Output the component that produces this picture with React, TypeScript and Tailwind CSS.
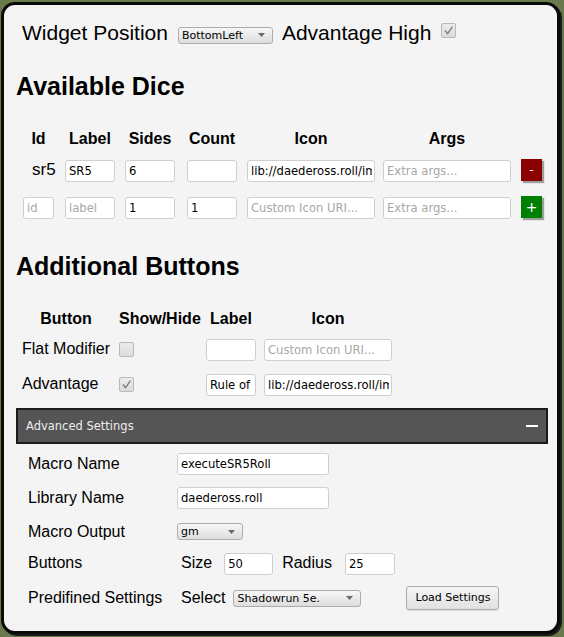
import React from "react";

const inputCls =
  "h-[22px] bg-white border border-[#cfcfcf] rounded-[3px] pl-[3px] pr-[2px] text-[11.6px] text-black placeholder:text-[#a8a8a8] outline-none font-['DejaVu_Sans',sans-serif] shrink-0";

function Input({ w, value, placeholder }: { w: string; value?: string; placeholder?: string }) {
  return <input className={`${inputCls} ${w}`} defaultValue={value} placeholder={placeholder} />;
}

function Select({ w, text, className = "" }: { w: string; text: string; className?: string }) {
  return (
    <div
      className={`${w} ${className} h-[17px] shrink-0 flex items-center justify-between pl-[3px] pr-[7px] border border-[#acacac] rounded-[3px] bg-gradient-to-b from-[#f7f7f7] to-[#dddddd] text-[11px] leading-none text-black font-['DejaVu_Sans',sans-serif]`}
    >
      <span className="whitespace-nowrap">{text}</span>
      <svg width="7" height="4" viewBox="0 0 7 4">
        <path d="M0 0 L7 0 L3.5 4 Z" fill="#6a6a6a" />
      </svg>
    </div>
  );
}

function Checkbox({ checked, className = "" }: { checked?: boolean; className?: string }) {
  return (
    <div
      className={`w-[15px] h-[15px] shrink-0 border border-[#b9b9b9] rounded-[2px] bg-gradient-to-b from-[#ebebeb] to-[#dcdcdc] flex items-center justify-center ${className}`}
    >
      {checked && (
        <svg width="11" height="11" viewBox="0 0 11 11">
          <path d="M2 5.5 L4.6 8.6 L9.4 1.6" stroke="#7c7c7c" strokeWidth="1.3" fill="none" />
        </svg>
      )}
    </div>
  );
}

export default function App() {
  return (
    <div className="w-[564px] h-[637px] bg-[#6b7a4c] pt-[2px] pl-[1px] font-['Liberation_Sans',Arial,sans-serif] text-black">
      <div className="w-[559px] h-[632px] bg-[#f4f4f4] border-[3px] border-[#0a0a0a] rounded-[14px] shadow-[2px_2px_0_#1a1a1a] pl-[12px] pr-[9px] pt-[16px]">
        {/* Top row */}
        <div className="flex items-center h-[24px] ml-[6px]">
          <span className="text-[21px] leading-[24px] whitespace-nowrap">Widget Position</span>
          <Select w="w-[95px]" text="BottomLeft" className="ml-[10px] mt-[4px]" />
          <span className="ml-[9px] text-[21px] leading-[24px] whitespace-nowrap">Advantage High</span>
          <Checkbox checked className="ml-[10px] -mt-[6px]" />
        </div>

        <h2 className="mt-[26px] text-[25px] leading-[30px] font-bold">Available Dice</h2>

        {/* Dice header */}
        <div className="mt-[28px] h-[20px] flex items-center text-[16px] font-bold leading-[20px]">
          <div className="ml-[7px] w-[31px] text-center">Id</div>
          <div className="ml-[11px] w-[50px] text-center">Label</div>
          <div className="ml-[10px] w-[50px] text-center">Sides</div>
          <div className="ml-[12px] w-[50px] text-center">Count</div>
          <div className="ml-[10px] w-[128px] text-center">Icon</div>
          <div className="ml-[8px] w-[128px] text-center">Args</div>
        </div>

        {/* Dice row 1 */}
        <div className="mt-[10px] h-[22px] flex items-center">
          <div className="ml-[7px] w-[31px] shrink-0 text-[17px] whitespace-nowrap">
            <span className="ml-[9px]">sr5</span>
          </div>
          <div className="ml-[11px]"><Input w="w-[50px]" value="SR5" /></div>
          <div className="ml-[10px]"><Input w="w-[50px]" value="6" /></div>
          <div className="ml-[12px]"><Input w="w-[50px]" value="" /></div>
          <div className="ml-[10px]"><Input w="w-[128px]" value="lib://daedeross.roll/images/sr5.png" /></div>
          <div className="ml-[8px]"><Input w="w-[128px]" placeholder="Extra args..." /></div>
          <div className="ml-[10px] w-[21px] h-[22px] bg-[#8b0000] text-white text-[12px] flex items-center justify-center shadow-[2px_2px_1px_rgba(0,0,0,0.35)] font-['DejaVu_Sans',sans-serif]">
            -
          </div>
        </div>

        {/* Dice row 2 */}
        <div className="mt-[15px] h-[22px] flex items-center">
          <div className="ml-[7px]"><Input w="w-[31px]" placeholder="id" /></div>
          <div className="ml-[11px]"><Input w="w-[50px]" placeholder="label" /></div>
          <div className="ml-[10px]"><Input w="w-[50px]" value="1" /></div>
          <div className="ml-[12px]"><Input w="w-[50px]" value="1" /></div>
          <div className="ml-[10px]"><Input w="w-[128px]" placeholder="Custom Icon URI..." /></div>
          <div className="ml-[8px]"><Input w="w-[128px]" placeholder="Extra args..." /></div>
          <div className="ml-[10px] w-[21px] h-[22px] bg-[#008000] text-white text-[14px] flex items-center justify-center shadow-[2px_2px_1px_rgba(0,0,0,0.35)] font-['DejaVu_Sans',sans-serif]">
            +
          </div>
        </div>

        <h2 className="mt-[33px] text-[25px] leading-[30px] font-bold">Additional Buttons</h2>

        {/* AB header */}
        <div className="mt-[28px] h-[20px] flex items-center text-[16px] font-bold leading-[20px]">
          <div className="ml-[6px] w-[88px] text-center">Button</div>
          <div className="ml-[9px] w-[80px] text-center whitespace-nowrap">Show/Hide</div>
          <div className="ml-[7px] w-[50px] text-center">Label</div>
          <div className="ml-[8px] w-[128px] text-center">Icon</div>
        </div>

        {/* Flat Modifier */}
        <div className="mt-[9px] h-[22px] flex items-center text-[16px]">
          <div className="ml-[6px] w-[88px] whitespace-nowrap">Flat Modifier</div>
          <div className="ml-[9px] w-[80px]"><Checkbox /></div>
          <div className="ml-[7px]"><Input w="w-[50px]" value="" /></div>
          <div className="ml-[8px]"><Input w="w-[128px]" placeholder="Custom Icon URI..." /></div>
        </div>

        {/* Advantage */}
        <div className="mt-[13px] h-[22px] flex items-center text-[16px]">
          <div className="ml-[6px] w-[88px] whitespace-nowrap">Advantage</div>
          <div className="ml-[9px] w-[80px]"><Checkbox checked /></div>
          <div className="ml-[7px]"><Input w="w-[50px]" value="Rule of Six" /></div>
          <div className="ml-[8px]"><Input w="w-[128px]" value="lib://daedeross.roll/images/adv.png" /></div>
        </div>

        {/* Advanced Settings bar */}
        <div className="mt-[13px] h-[36px] bg-[#555555] border-2 border-[#1c1c1c] flex items-center justify-between pl-[8px] pr-[8px]">
          <span className="text-[11.5px] text-[#eeeeee] font-['DejaVu_Sans',sans-serif] mt-[2px]">Advanced Settings</span>
          <div className="w-[12px] h-[2px] bg-white" />
        </div>

        {/* Macro Name */}
        <div className="mt-[9px] h-[22px] flex items-center text-[16px]">
          <div className="ml-[12px] w-[149px] whitespace-nowrap">Macro Name</div>
          <Input w="w-[152px]" value="executeSR5Roll" />
        </div>

        {/* Library Name */}
        <div className="mt-[12px] h-[22px] flex items-center text-[16px]">
          <div className="ml-[12px] w-[149px] whitespace-nowrap">Library Name</div>
          <Input w="w-[152px]" value="daedeross.roll" />
        </div>

        {/* Macro Output */}
        <div className="mt-[14px] h-[17px] flex items-center text-[16px]">
          <div className="ml-[12px] w-[149px] whitespace-nowrap">Macro Output</div>
          <Select w="w-[66px]" text="gm" />
        </div>

        {/* Buttons */}
        <div className="mt-[12px] h-[22px] flex items-center text-[16px]">
          <div className="ml-[12px] w-[149px] whitespace-nowrap">Buttons</div>
          <span className="ml-[4px]">Size</span>
          <div className="ml-[12px]"><Input w="w-[49px]" value="50" /></div>
          <span className="ml-[9px]">Radius</span>
          <div className="ml-[13px]"><Input w="w-[50px]" value="25" /></div>
        </div>

        {/* Predifined Settings */}
        <div className="mt-[12px] h-[24px] flex items-center text-[16px]">
          <div className="ml-[12px] w-[149px] whitespace-nowrap">Predifined Settings</div>
          <span className="ml-[4px]">Select</span>
          <Select w="w-[128px]" text="Shadowrun 5e." className="ml-[8px]" />
          <button className="ml-[45px] w-[93px] h-[24px] border border-[#acacac] rounded-[3px] bg-gradient-to-b from-[#f5f5f5] to-[#e1e1e1] text-[11px] text-black font-['DejaVu_Sans',sans-serif] shadow-[0_1px_1px_rgba(0,0,0,0.1)]">
            Load Settings
          </button>
        </div>
      </div>
    </div>
  );
}
